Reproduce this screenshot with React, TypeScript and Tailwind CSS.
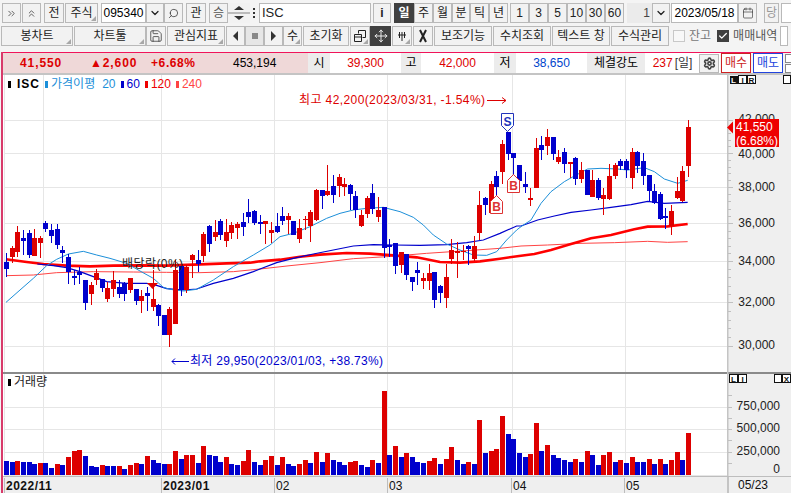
import type { ReactNode } from "react";
import { Calendar, Check, ChevronDown, ChevronsRight, ChevronsUp, Move, Save, Search, Settings } from "lucide-react";
import clsx from "clsx";
import { twMerge } from "tailwind-merge";

const FONT = "[font-family:'Liberation_Sans','Noto_Sans_CJK_KR',sans-serif]";
const RED = "#dd0000";
const BLUE = "#0000cc";

const STEP = 5.636;
const cx = (i: number) => 6 + STEP * i;

// [up, wick top, body top, body bottom, wick bottom] read off the 3x crops, y = 100 + v / 3
const candles: [number, number, number, number, number][] = [
  [0, 460, 485, 507, 530], [1, 438, 444, 472, 490], [1, 378, 396, 456, 470], [0, 390, 414, 423, 465],
  [0, 390, 399, 465, 475], [1, 387, 414, 468, 468], [1, 408, 414, 429, 475], [0, 363, 369, 387, 396],
  [0, 372, 390, 408, 430], [0, 372, 387, 435, 447], [0, 438, 450, 459, 490], [0, 462, 471, 516, 552],
  [0, 510, 528, 534, 555], [0, 500, 516, 525, 552], [0, 540, 540, 609, 630], [1, 546, 555, 582, 615],
  [1, 507, 519, 540, 555], [0, 537, 537, 564, 576], [1, 546, 564, 597, 606], [1, 513, 540, 567, 591],
  [0, 540, 561, 582, 594], [0, 546, 549, 582, 603], [1, 534, 534, 570, 579], [0, 567, 567, 603, 615],
  [1, 570, 588, 603, 639], [0, 561, 579, 588, 633], [1, 510, 597, 621, 633], [0, 612, 615, 648, 678],
  [0, 645, 645, 705, 705], [1, 621, 627, 705, 741], [1, 480, 510, 672, 672], [0, 498, 498, 570, 588],
  [1, 495, 501, 570, 579], [1, 462, 465, 480, 534], [0, 450, 480, 492, 516], [1, 396, 402, 468, 486],
  [0, 375, 378, 432, 456], [1, 360, 396, 411, 423], [0, 357, 363, 405, 420], [1, 357, 396, 423, 441],
  [1, 366, 375, 399, 417], [1, 366, 372, 384, 417], [0, 339, 366, 381, 408], [0, 297, 336, 351, 369],
  [0, 330, 333, 369, 375], [0, 345, 366, 372, 402], [1, 363, 363, 372, 432], [1, 366, 390, 399, 430],
  [0, 339, 378, 396, 399], [0, 321, 348, 363, 375], [1, 339, 348, 360, 402], [0, 363, 363, 405, 405],
  [1, 357, 384, 417, 429], [1, 348, 356, 359, 390], [1, 330, 336, 378, 426], [1, 267, 270, 360, 363],
  [0, 270, 270, 288, 327], [1, 195, 273, 285, 288], [0, 225, 258, 285, 309], [1, 222, 231, 258, 291],
  [1, 234, 252, 261, 288], [0, 252, 255, 282, 330], [0, 273, 288, 330, 354], [1, 330, 345, 378, 381],
  [1, 288, 294, 342, 354], [0, 252, 279, 327, 342], [1, 291, 330, 351, 366], [0, 321, 321, 444, 474],
  [0, 417, 435, 441, 471], [0, 429, 429, 498, 522], [1, 456, 456, 495, 519], [0, 462, 462, 525, 540],
  [0, 531, 531, 546, 573], [0, 486, 510, 519, 555], [1, 519, 534, 543, 567], [1, 492, 519, 543, 570],
  [0, 516, 516, 600, 624], [0, 555, 558, 579, 609], [1, 492, 531, 594, 624], [1, 417, 450, 477, 492],
  [1, 426, 453, 459, 534], [1, 435, 453, 457, 480], [0, 435, 438, 447, 495], [1, 408, 438, 477, 483],
  [1, 273, 315, 399, 420], [0, 291, 294, 315, 345], [1, 243, 252, 339, 342], [0, 213, 228, 261, 288],
  [1, 120, 132, 216, 252], [0, 96, 96, 162, 180], [0, 159, 159, 174, 225], [0, 195, 195, 243, 255],
  [0, 216, 252, 261, 279], [1, 264, 294, 300, 318], [1, 114, 144, 264, 264], [0, 108, 135, 150, 180],
  [1, 87, 111, 138, 165], [0, 111, 111, 162, 180], [1, 150, 171, 186, 192], [0, 144, 156, 192, 219],
  [1, 186, 186, 192, 234], [0, 171, 174, 237, 255], [1, 186, 210, 237, 249], [0, 210, 210, 285, 285],
  [1, 210, 240, 291, 291], [0, 234, 240, 294, 300], [1, 264, 285, 297, 345], [1, 192, 228, 297, 300],
  [1, 189, 195, 228, 237], [0, 177, 183, 198, 210], [0, 177, 183, 210, 234], [1, 144, 156, 234, 267],
  [0, 153, 156, 198, 219], [0, 159, 183, 228, 255], [0, 225, 225, 273, 306], [0, 252, 273, 309, 312],
  [0, 276, 282, 357, 360], [0, 324, 348, 354, 387], [1, 315, 333, 378, 405], [1, 231, 273, 294, 297],
  [1, 198, 213, 303, 306], [1, 60, 81, 198, 231],
];

// [up, height in px]
const volumes: [number, number][] = [
  [0, 14], [0, 13], [1, 14], [0, 13], [0, 13], [0, 11], [1, 12], [0, 12], [0, 7], [1, 11], [0, 10], [1, 18], [1, 24], [1, 25],
  [0, 19], [0, 9], [0, 8], [1, 10], [0, 9], [0, 9], [1, 9], [0, 6], [1, 10], [1, 12], [0, 11], [1, 19], [0, 15], [0, 12],
  [0, 11], [1, 11], [1, 24], [0, 16], [1, 20], [1, 20], [0, 12], [1, 29], [0, 20], [0, 19], [0, 13], [1, 18], [0, 11], [0, 10],
  [1, 14], [1, 25], [0, 13], [0, 10], [1, 15], [1, 19], [0, 10], [1, 18], [0, 11], [0, 9], [1, 11], [1, 15], [0, 12], [1, 23],
  [0, 13], [1, 22], [0, 15], [0, 13], [0, 10], [1, 13], [1, 14], [0, 10], [0, 8], [1, 15], [0, 12], [1, 84], [0, 20], [1, 29],
  [0, 18], [1, 22], [0, 18], [0, 13], [0, 12], [1, 14], [1, 17], [0, 11], [1, 16], [1, 28], [0, 15], [0, 11], [1, 13], [0, 11],
  [1, 55], [0, 22], [1, 24], [1, 26], [1, 59], [0, 41], [0, 36], [0, 22], [0, 18], [1, 21], [1, 52], [0, 24], [1, 30], [0, 20],
  [0, 17], [0, 15], [0, 13], [1, 16], [0, 13], [1, 24], [0, 20], [0, 10], [1, 20], [1, 23], [0, 13], [1, 15], [0, 12], [1, 18],
  [0, 13], [0, 13], [1, 16], [0, 11], [1, 16], [0, 11], [1, 15], [1, 23], [0, 15], [1, 42],
];

// moving averages as crop coordinates: [crop x offset, [x, y] ...]
const pts = (off: number, list: number[][]) => list.map(([x, y]) => `${off + x / 3},${100 + y / 3}`).join(" ");

const ma20 = [
  pts(0, [[18, 607], [60, 570], [100, 535], [140, 497], [170, 478], [205, 462], [250, 454], [290, 465], [330, 475], [380, 490], [420, 513], [460, 535], [490, 562], [510, 568], [550, 573], [590, 568], [640, 540], [700, 500], [760, 465]]),
  pts(260, [[30, 435], [60, 410], [100, 400], [150, 380], [200, 355], [240, 340], [280, 330], [320, 325], [370, 322], [420, 335], [460, 352], [490, 375], [520, 405], [560, 432], [600, 450], [640, 465], [680, 466], [710, 455], [740, 420], [770, 390]]),
  pts(521, [[0, 380], [30, 360], [60, 310], [90, 275], [130, 245], [160, 228], [200, 207], [240, 205], [290, 207], [320, 210], [370, 203], [400, 215], [430, 237], [470, 250], [500, 241]]),
].join(" ");
const ma60 = [
  pts(0, [[112, 492], [160, 497], [200, 503], [240, 515], [280, 530], [320, 545], [380, 550], [440, 550], [470, 556], [500, 566], [550, 570], [590, 567], [640, 550], [700, 535], [760, 515]]),
  pts(260, [[0, 507], [50, 488], [100, 475], [160, 462], [220, 450], [280, 438], [340, 434], [400, 435], [480, 436], [560, 434], [620, 428], [670, 420], [720, 400], [770, 378]]),
  pts(521, [[0, 378], [50, 360], [100, 348], [150, 337], [210, 330], [270, 322], [330, 314], [380, 304], [430, 310], [500, 307]]),
].join(" ");
const ma120 = [
  pts(0, [[18, 478], [80, 486], [130, 492], [200, 497], [270, 499], [340, 497], [420, 496], [500, 497], [600, 493], [680, 490], [750, 488]]),
  pts(260, [[0, 484], [60, 479], [120, 470], [180, 464], [260, 459], [330, 461], [400, 466], [470, 472], [540, 486], [600, 488], [660, 484], [720, 476]]),
  pts(521, [[0, 467], [40, 462], [90, 450], [150, 432], [210, 415], [270, 405], [340, 388], [380, 380], [440, 379], [500, 372]]),
].join(" ");
const ma240 = [
  pts(0, [[18, 527], [100, 525], [170, 518], [280, 515], [400, 516], [500, 517], [600, 518], [700, 515]]),
  pts(260, [[0, 507], [90, 497], [180, 488], [280, 476], [380, 470], [500, 460], [620, 452], [720, 445]]),
  pts(521, [[0, 438], [80, 435], [180, 430], [280, 428], [380, 424], [440, 427], [500, 425]]),
].join(" ");

const H_LINES = [120, 153, 187, 223, 261, 302, 346];
const V_LINES = [4, 43, 161, 274, 387, 512, 625];
const GRID = "#e6e6e6";

function Btn({ className, corner, children }: { className: string; corner?: boolean; children?: ReactNode }) {
  return (
    <div className={twMerge("relative flex h-[20px] shrink-0 items-center justify-center border border-[#b9b9b9] bg-[#f2f2f2] text-[12px] text-[#222]", className)}>
      {children}
      {corner && <span className="absolute bottom-[1px] right-[1px] h-0 w-0 border-b-[5px] border-l-[5px] border-b-[#a8a8a8] border-l-transparent" />}
    </div>
  );
}

function Toolbar1() {
  return (
    <div className="flex h-[20px] pl-[2px]">
      <Btn className="w-[19px]"><ChevronsRight size={11} strokeWidth={1.5} /></Btn>
      <Btn className="ml-[1px] w-[19px]"><ChevronsUp size={11} strokeWidth={1.5} /></Btn>
      <Btn className="ml-[3px] w-[20px]">전</Btn>
      <Btn className="ml-[1px] w-[33px]" corner>주식</Btn>
      <div className="ml-[3px] flex h-[20px] w-[45px] shrink-0 items-center justify-center border border-[#b9b9b9] bg-white text-[12px] text-black">095340</div>
      <Btn className="w-[18px]"><ChevronDown size={12} strokeWidth={2.5} /></Btn>
      <Btn className="w-[19px]"><Search size={11} strokeWidth={1.5} className="-scale-x-100" /></Btn>
      <Btn className="ml-[3px] w-[20px]">관</Btn>
      <Btn className="ml-[3px] w-[19px] text-[#555]">승</Btn>
      <div className="flex h-[20px] w-[22px] shrink-0 flex-col items-center justify-center gap-[2px] bg-[#f2f2f2]">
        <span className="h-0 w-0 border-x-[5px] border-b-[4px] border-x-transparent border-b-[#333]" />
        <span className="h-[2px] w-full bg-[#bbb]" />
        <span className="h-0 w-0 border-x-[5px] border-t-[4px] border-x-transparent border-t-[#333]" />
      </div>
      <div className="flex w-[7px] shrink-0 flex-col items-center justify-center gap-[2px]">
        <span className="h-[2px] w-[2px] bg-[#333]" />
        <span className="h-[2px] w-[2px] bg-[#333]" />
        <span className="h-[2px] w-[2px] bg-[#333]" />
      </div>
      <div className="ml-[2px] flex h-[20px] w-[112px] shrink-0 items-center border border-[#b9b9b9] bg-white pl-[2px] text-[13px] text-[#222]">ISC</div>
      <Btn className="ml-[2px] w-[18px] font-bold">i</Btn>
      <Btn className="ml-[3px] w-[20px] border-[#404040] bg-[#404040] font-bold text-white">일</Btn>
      <Btn className="w-[19px]">주</Btn>
      <Btn className="w-[19px]">월</Btn>
      <Btn className="w-[18px]">분</Btn>
      <Btn className="w-[19px]">틱</Btn>
      <Btn className="w-[19px]">년</Btn>
      <Btn className="ml-[2px] w-[19px]">1</Btn>
      <Btn className="w-[19px]">3</Btn>
      <Btn className="w-[19px]">5</Btn>
      <Btn className="w-[19px]">10</Btn>
      <Btn className="w-[19px]">30</Btn>
      <Btn className="w-[19px]">60</Btn>
      <div className="ml-[3px] flex h-[20px] w-[25px] shrink-0 items-center justify-end bg-[#ebebeb] pr-[2px] text-[12px] text-[#444]">1</div>
      <Btn className="w-[18px]"><ChevronDown size={12} strokeWidth={2.5} /></Btn>
      <div className="ml-[1px] flex h-[20px] w-[67px] shrink-0 items-center justify-center border border-[#b9b9b9] bg-white text-[12px] text-black">2023/05/18</div>
      <Btn className="w-[19px]"><Calendar size={12} strokeWidth={1.2} /></Btn>
      <Btn className="ml-[7px] w-[15px] text-[#999]">당</Btn>
      <div className="ml-[2px] h-[20px] w-[20px] shrink-0 border border-[#b9b9b9] bg-white" />
    </div>
  );
}

function Toolbar2() {
  return (
    <div className="mt-[3px] flex h-[20px] pl-[1px]">
      <Btn className="w-[72px]" corner>봉차트</Btn>
      <Btn className="ml-[1px] w-[72px]" corner>차트툴</Btn>
      <Btn className="w-[20px]"><Save size={14} strokeWidth={1.2} /></Btn>
      <Btn className="ml-[1px] w-[58px]" corner>관심지표</Btn>
      <Btn className="ml-[1px] w-[19px]"><span className="h-0 w-0 border-y-[5px] border-r-[5px] border-y-transparent border-r-[#333]" /></Btn>
      <Btn className="w-[19px] bg-[#e6e6e6]"><span className="h-[6px] w-[6px] bg-[#888]" /></Btn>
      <Btn className="w-[19px]"><span className="h-0 w-0 border-y-[5px] border-l-[5px] border-y-transparent border-l-[#333]" /></Btn>
      <Btn className="w-[19px]" corner>수</Btn>
      <Btn className="ml-[1px] w-[46px]">초기화</Btn>
      <Btn className="ml-[1px] w-[20px]" corner>
        <svg width="14" height="14" viewBox="0 0 14 14" fill="none" stroke="#222"><path d="M5.5 4.5V1.5h7v7h-3M1.5 5.5h7v7h-7zM1.5 8h7" /></svg>
      </Btn>
      <Btn className="w-[21px] border-[#404040] bg-[#404040] text-white"><Move size={14} strokeWidth={1.5} /></Btn>
      <Btn className="ml-[1px] w-[20px]" corner>
        <svg width="12" height="12" viewBox="0 0 12 12" stroke="#222" strokeWidth="1"><path d="M3.5 2v6M6 2v9M8.5 2v6M2 5h8" /></svg>
      </Btn>
      <Btn className="ml-[1px] w-[20px]">
        <svg width="12" height="14" viewBox="0 0 12 14" fill="none" stroke="#222" strokeWidth="2"><path d="M3 1l6 12M9 1L3 13" /></svg>
      </Btn>
      <Btn className="ml-[1px] w-[58px]">보조기능</Btn>
      <Btn className="ml-[1px] w-[58px]">수치조회</Btn>
      <Btn className="ml-[1px] w-[58px]">텍스트 창</Btn>
      <Btn className="ml-[1px] w-[58px]">수식관리</Btn>
      <span className="ml-[4px] mt-[4px] h-[12px] w-[12px] shrink-0 border border-[#c8c8c8] bg-[#f8f8f8]" />
      <span className="ml-[4px] shrink-0 text-[12px] leading-[20px] text-[#777]">잔고</span>
      <span className="ml-[6px] mt-[4px] flex h-[12px] w-[12px] shrink-0 items-center justify-center bg-[#404040] text-white"><Check size={10} strokeWidth={3} /></span>
      <span className="ml-[4px] shrink-0 text-[12px] leading-[20px] text-[#555]">매매내역</span>
      <div className="ml-[3px] h-[20px] w-[8px] shrink-0 border border-[#b9b9b9] bg-white" />
    </div>
  );
}

function Label({ className, children }: { className: string; children: ReactNode }) {
  return <div className={clsx("flex h-full shrink-0 items-center justify-center text-[12px]", className)}>{children}</div>;
}

function InfoRow() {
  return (
    <div className="flex h-[23px] border-b-2 border-b-[#c4c4c4] border-t border-t-[#f0145a] pl-[2px]">
      <div className="flex h-full w-[306px] shrink-0 items-center bg-[#efd8d8] pl-[18px] text-[12px]">
        <span className="w-[70px] font-bold tracking-[0.9px] text-[#dd0000]">41,550</span>
        <span className="w-[61px] font-bold tracking-[0.9px] text-[#dd0000]">▲2,600</span>
        <span className="w-[82px] font-bold tracking-[0.6px] text-[#dd0000]">+6.68%</span>
        <span className="text-black">453,194</span>
      </div>
      <Label className="w-[22px] bg-[#ececec]">시</Label>
      <Label className="w-[71px] bg-white text-[#dd0000]">39,300</Label>
      <Label className="w-[20px] bg-[#ececec]">고</Label>
      <Label className="w-[73px] bg-white text-[#dd0000]">42,000</Label>
      <Label className="w-[22px] bg-[#ececec]">저</Label>
      <Label className="w-[71px] bg-white text-[#0044cc]">38,650</Label>
      <Label className="w-[58px] bg-[#ececec]">체결강도</Label>
      <Label className="w-[53px] bg-white pl-[2px]"><span className="text-[#dd0000]">237</span><span className="ml-[2px] text-[#333]">[일]</span></Label>
      <div className="flex h-full w-[22px] shrink-0 items-center justify-center bg-white">
        <div className="flex h-[19px] w-[20px] items-center justify-center border border-[#b9b9b9] bg-[#f2f2f2]">
          <Settings size={13} strokeWidth={3} className="text-[#444]" />
        </div>
      </div>
      <Label className="my-auto ml-[1px] h-[19px] w-[30px] border border-[#cc2222] bg-white text-[#cc2222]">매수</Label>
      <Label className="my-auto ml-[2px] h-[19px] w-[30px] border border-[#2244dd] bg-white text-[#2244dd]">매도</Label>
      <div className="my-auto ml-[2px] flex h-[19px] w-[8px] shrink-0 flex-col gap-[1px]">
        <span className="h-[9px] border border-[#888] bg-white" />
        <span className="h-[9px] border border-[#888] bg-white" />
      </div>
    </div>
  );
}

function Grid({ ys }: { ys: number[] }) {
  return (
    <g shapeRendering="crispEdges" stroke={GRID} strokeWidth="1">
      {ys.map((y) => <line key={y} x1="4" x2="727" y1={y + 0.5} y2={y + 0.5} />)}
    </g>
  );
}

function LegendMark({ color }: { color: string }) {
  return <span className="mr-[3px] inline-block h-[7px] w-[3px] align-[0px]" style={{ backgroundColor: color }} />;
}

function PricePane() {
  return (
    <div className="relative h-[297px] bg-white">
      <svg width="727" height="297" viewBox="0 75 727 297" className={clsx("block", FONT)}>
        <Grid ys={H_LINES} />
        <g shapeRendering="crispEdges" stroke={GRID}>
          {V_LINES.map((x) => <line key={x} x1={x + 0.5} x2={x + 0.5} y1="75" y2="372" strokeWidth={x === 4 ? 1 : 1.5} />)}
        </g>
        <polyline points={ma240} fill="none" stroke="#ff4444" strokeWidth="1" />
        <polyline points={ma120} fill="none" stroke="#ff0000" strokeWidth="2.6" />
        <polyline points={ma60} fill="none" stroke="#0000cc" strokeWidth="1.2" />
        <polyline points={ma20} fill="none" stroke="#1c8fd9" strokeWidth="1" />
        <g shapeRendering="crispEdges">
          {candles.map(([up, hi, top, bot, lo], i) => {
            const x = Math.round(cx(i));
            const color = up ? RED : BLUE;
            return (
              <g key={i} fill={color}>
                <rect x={x} y={100 + hi / 3} width="1" height={(lo - hi) / 3} />
                <rect x={x - 2} y={100 + top / 3} width="5" height={Math.max((bot - top) / 3, 1)} />
              </g>
            );
          })}
        </g>
        <path d="M147 283h11l-5.500 6z" fill="#e00000" />
        <text x="122" y="268" fontSize="12" fill="#222" textLength="61">배당락(0%)</text>
        <text x="299" y="104" fontSize="12" fill="#dd0000" textLength="186">최고 42,200(2023/03/31, -1.54%)</text>
        <path d="M487 100.500h19M502 97.500l4 3-4 3" fill="none" stroke="#dd0000" />
        <text x="190" y="365" fontSize="12" fill="#0000cc" textLength="193">최저 29,950(2023/01/03, +38.73%)</text>
        <path d="M172 361.500h17M175 358.500l-3 3 3 3" fill="none" stroke="#0000cc" />
        <path d="M501.500 113.500h12v12l-6 6-6-6z" fill="#fff" stroke="#2233bb" />
        <text x="507.500" y="126" fontSize="12" fontWeight="700" textAnchor="middle" fill="#2233bb">S</text>
        <path d="M490.500 213.500h12v-12l-6-6-6 6z" fill="#fff" stroke="#dd3333" />
        <text x="496.500" y="211" fontSize="12" fontWeight="700" textAnchor="middle" fill="#dd3333">B</text>
        <path d="M507.500 192.500h12v-12l-6-6-6 6z" fill="#fff" stroke="#dd3333" />
        <text x="513.500" y="190" fontSize="12" fontWeight="700" textAnchor="middle" fill="#dd3333">B</text>
      </svg>
      <div className={clsx("absolute left-[8px] top-[2px] flex items-center text-[12px] leading-[14px]", FONT)}>
        <LegendMark color="#000" />
        <span className="ml-[3px] font-bold tracking-[1px] text-black">ISC</span>
        <span className="ml-[5px] text-[#1c8fd9]"><LegendMark color="#1c8fd9" />가격이평<span className="ml-[7px]">20</span></span>
        <span className="ml-[5px] text-[#0000cc]"><LegendMark color="#0000cc" />60</span>
        <span className="ml-[5px] text-[#ee0000]"><LegendMark color="#ee0000" />120</span>
        <span className="ml-[5px] text-[#ff4444]"><LegendMark color="#ff4444" />240</span>
      </div>
    </div>
  );
}

function PriceAxis() {
  const labels: [string, number][] = [["42,000", 123], ["40,000", 158], ["38,000", 191], ["36,000", 227], ["34,000", 265], ["32,000", 306], ["30,000", 349]];
  const minor = H_LINES.flatMap((y, i, all) => {
    const next = all[i + 1];
    return next ? [1, 2, 3, 4].map((k) => y + ((next - y) * k) / 5) : [];
  });
  return (
    <svg width="64" height="297" viewBox="727 75 64 297" className={clsx("block", FONT)}>
      <rect x="727" y="75" width="1.500" height="297" fill="#c4c4c4" />
      <g stroke="#c0c0c0" shapeRendering="crispEdges">
        {H_LINES.map((y) => <line key={y} x1="728" x2="733" y1={y + 0.5} y2={y + 0.5} />)}
        {minor.map((y) => <line key={y} x1="728" x2="731" y1={Math.round(y) + 0.5} y2={Math.round(y) + 0.5} />)}
      </g>
      {labels.map(([t, y]) => <text key={t} x="775" y={y} fontSize="12" textAnchor="end" fill="#222">{t}</text>)}
      <path d="M727 127.500l6-6v12z" fill="#ee0000" />
      <rect x="735" y="119" width="44" height="28" fill="#ee0000" />
      <text x="736" y="131" fontSize="12" fill="#fff">41,550</text>
      <text x="736" y="145" fontSize="12" fill="#fff" textLength="42">(6.68%)</text>
      <g fontSize="8" fontWeight="700" textAnchor="middle" shapeRendering="crispEdges">
        <rect x="729.500" y="75.500" width="8" height="8" fill="#111" />
        <text x="733.500" y="83" fill="#fff">L</text>
        <rect x="738.500" y="75.500" width="8" height="8" fill="#fff" stroke="#111" />
        <text x="742.500" y="83" fill="#111">I</text>
        <rect x="747.500" y="75.500" width="8" height="8" fill="#fff" stroke="#111" />
        <text x="751.500" y="83" fill="#111">R</text>
        <rect x="783.500" y="75.500" width="7" height="8" fill="#fff" stroke="#111" />
      </g>
    </svg>
  );
}

function VolumePane() {
  return (
    <div className="relative h-[104px] border-t-2 border-t-[#8a8a8a] bg-white">
      <svg width="727" height="102" viewBox="0 374 727 102" className="block">
        <Grid ys={[407, 429, 452, 475]} />
        <g shapeRendering="crispEdges" stroke={GRID}>
          {V_LINES.map((x) => <line key={x} x1={x + 0.5} x2={x + 0.5} y1="374" y2="476" strokeWidth={x === 4 ? 1 : 1.5} />)}
        </g>
        <g shapeRendering="crispEdges">
          {volumes.map(([up, h], i) => (
            <rect key={i} x={Math.round(cx(i)) - 2} y={475 - h} width="5" height={h} fill={up ? RED : BLUE} />
          ))}
        </g>
      </svg>
      <div className={clsx("absolute left-[8px] top-[1px] flex items-center text-[12px] leading-[14px] text-[#222]", FONT)}>
        <LegendMark color="#000" />거래량
      </div>
    </div>
  );
}

function VolumeAxis() {
  const labels: [string, number][] = [["750,000", 410], ["500,000", 432], ["250,000", 455], ["0", 473]];
  return (
    <svg width="64" height="104" viewBox="727 372 64 104" className={clsx("block", FONT)}>
      <rect x="727" y="372" width="64" height="2" fill="#8a8a8a" />
      <rect x="727" y="372" width="1.500" height="104" fill="#c4c4c4" />
      <g stroke="#c0c0c0" shapeRendering="crispEdges">
        {[395, 407, 418, 429, 440, 452, 463].map((y) => <line key={y} x1="728" x2="732" y1={y + 0.5} y2={y + 0.5} />)}
      </g>
      {labels.map(([t, y]) => <text key={t} x="780" y={y} fontSize="12" textAnchor="end" fill="#222">{t}</text>)}
      <g fontSize="8" fontWeight="700" textAnchor="middle" shapeRendering="crispEdges">
        <rect x="729.500" y="374.500" width="8" height="8" fill="#fff" stroke="#111" />
        <text x="733.500" y="382" fill="#111">L</text>
        <rect x="738.500" y="374.500" width="8" height="8" fill="#fff" stroke="#111" />
        <text x="742.500" y="382" fill="#111">I</text>
        <rect x="774.500" y="374.500" width="7" height="8" fill="#fff" stroke="#111" />
        <rect x="782.500" y="374.500" width="8" height="8" fill="#fff" stroke="#111" />
        <text x="786.500" y="382" fill="#111">X</text>
      </g>
    </svg>
  );
}

function TimeAxis() {
  const ticks: [number, string, boolean][] = [[4, "2022/11", true], [161, "2023/01", true], [274, "02", false], [387, "03", false], [511, "04", false], [624, "05", false]];
  return (
    <div className={clsx("relative flex h-[17px] border-t border-t-[#bdbdbd] text-[12px] text-[#111]", FONT)}>
      {ticks.map(([x, t, bold]) => (
        <span key={t} className={clsx("absolute top-[1px] h-[15px] border-l border-l-[#bdbdbd] pl-[1px] leading-[16px]", bold && "font-bold tracking-[0.5px]")} style={{ left: x }}>{t}</span>
      ))}
      <span className="absolute left-[727px] top-0 h-[17px] w-[64px] border-l-2 border-l-[#c4c4c4] pl-[9px] leading-[17px]">05/23</span>
    </div>
  );
}

export default function App() {
  return (
    <div className={clsx("h-[493px] w-[791px] overflow-hidden bg-[#f4f4f4] pt-[3px]", FONT)}>
      <Toolbar1 />
      <Toolbar2 />
      <div className="relative mt-[6px]">
        <InfoRow />
        <div className="grid grid-cols-[727px_64px]">
          <PricePane />
          <div className="bg-[#efefef]"><PriceAxis /></div>
          <VolumePane />
          <div className="bg-[#efefef]"><VolumeAxis /></div>
        </div>
        <div className="bg-[#efefef]"><TimeAxis /></div>
        <span className="absolute inset-y-0 left-0 w-[1px] bg-[#f4f4f4]" />
        <span className="absolute inset-y-0 left-[1px] w-[2px] bg-[#d83a6a]" />
      </div>
    </div>
  );
}
